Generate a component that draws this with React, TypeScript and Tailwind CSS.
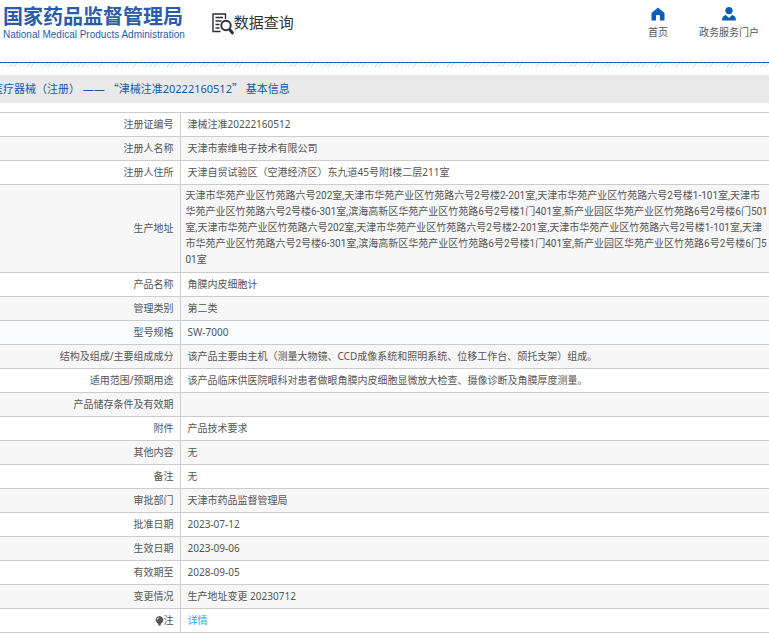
import React from 'react';

type Row = {
  label: string;
  value: string;
  highlight?: boolean;
  dense?: boolean;
  marked?: boolean;
  link?: boolean;
};

const ADDRESS =
  '天津市华苑产业区竹苑路六号202室,天津市华苑产业区竹苑路六号2号楼2-201室,天津市华苑产业区竹苑路六号2号楼1-101室,天津市华苑产业区竹苑路六号2号楼6-301室,滨海高新区华苑产业区竹苑路6号2号楼1门401室,新产业园区华苑产业区竹苑路6号2号楼6门501室';

const rows: Row[] = [
  { label: '注册证编号', value: '津械注准20222160512' },
  { label: '注册人名称', value: '天津市索维电子技术有限公司' },
  { label: '注册人住所', value: '天津自贸试验区（空港经济区）东九道45号附I楼二层211室' },
  { label: '生产地址', value: `${ADDRESS},${ADDRESS}`, dense: true },
  { label: '产品名称', value: '角膜内皮细胞计' },
  { label: '管理类别', value: '第二类' },
  { label: '型号规格', value: 'SW-7000', highlight: true },
  { label: '结构及组成/主要组成成分', value: '该产品主要由主机（测量大物镜、CCD成像系统和照明系统、位移工作台、颌托支架）组成。' },
  { label: '适用范围/预期用途', value: '该产品临床供医院眼科对患者做眼角膜内皮细胞显微放大检查、摄像诊断及角膜厚度测量。' },
  { label: '产品储存条件及有效期', value: '' },
  { label: '附件', value: '产品技术要求' },
  { label: '其他内容', value: '无' },
  { label: '备注', value: '无' },
  { label: '审批部门', value: '天津市药品监督管理局' },
  { label: '批准日期', value: '2023-07-12' },
  { label: '生效日期', value: '2023-09-06' },
  { label: '有效期至', value: '2028-09-05' },
  { label: '变更情况', value: '生产地址变更 20230712' },
  { label: '注', value: '详情', marked: true, link: true },
];

const SearchDocIcon = () => (
  <svg width="22" height="22" viewBox="0 0 22 22" fill="none" stroke="#2f2c38" aria-hidden="true">
    <path d="M13.500 6V1H1V18.500H8.500" strokeWidth="1.4" />
    <path d="M3.500 4.500h7.500M3.500 8h6M3.500 11.500h4M3.500 15h4" strokeWidth="1.3" />
    <circle cx="14" cy="12.500" r="4.700" strokeWidth="1.9" />
    <path d="M17.500 16.500l3.800 4.300" strokeWidth="3" />
  </svg>
);

const HomeIcon = () => (
  <svg width="14" height="14" viewBox="0 0 14 14" fill="#0d5cb8" aria-hidden="true">
    <path d="M7 0.500L13.500 6v7.500H9V9a1 1 0 0 0-1-1H6a1 1 0 0 0-1 1v4.500H0.500V6z" />
  </svg>
);

const UserIcon = () => (
  <svg width="14" height="14" viewBox="0 0 14 14" fill="#0d5cb8" aria-hidden="true">
    <circle cx="7" cy="3.600" r="3.600" />
    <path d="M4 8L7 11 10 8C12.800 8.600 14 10.500 14 13.500H0C0 10.500 1.200 8.600 4 8z" />
  </svg>
);

const BulbIcon = () => (
  <svg className="inline-block" width="9" height="10" viewBox="0 0 9 10" aria-hidden="true">
    <path d="M4.500 0a3.900 3.900 0 0 1 2.300 7L5.700 8v1.600H3.300V8L2.200 7A3.900 3.900 0 0 1 4.500 0z" fill="#555" />
    <path d="M2.200 3.800A2.300 2.300 0 0 1 4.200 1.700" stroke="#eee" strokeWidth="1" fill="none" />
  </svg>
);

const App: React.FC = () => {
  return (
    <div className="overflow-x-hidden bg-white pb-1 text-[10px] leading-4 text-[#555] font-['Noto_Sans','Noto_Sans_CJK_SC',sans-serif]">
      {/* Header */}
      <header className="flex h-[63px] items-start justify-between border-b border-[#1a5ca5] pr-[10px] pl-[3px]">
        <div className="flex items-start gap-[27px]">
          <div className="pt-[5px] text-[#2a5caa]">
            <h1 className="text-[20px] leading-6 font-bold">国家药品监督管理局</h1>
            <p className="font-['Liberation_Sans',sans-serif] text-[10px] leading-3">National Medical Products Administration</p>
          </div>
          <div className="flex items-center pt-3 text-[15px] leading-5 text-[#333]">
            <SearchDocIcon />
            <span className="pb-1">数据查询</span>
          </div>
        </div>
        <nav className="flex gap-[31px] pt-[7px]">
          <a href="#" className="flex flex-col items-center gap-[3px]">
            <HomeIcon />
            <span>首页</span>
          </a>
          <a href="#" className="flex flex-col items-center gap-[3px]">
            <UserIcon />
            <span>政务服务门户</span>
          </a>
        </nav>
      </header>
      <div className="h-1 bg-[repeating-linear-gradient(135deg,#dfe9ec_0px,#dfe9ec_1px,#fff_1px,#fff_3px)]" />

      {/* Title bar */}
      <div className="mt-2 bg-[#e9e9e9] py-1">
        <h2 className="-ml-2 text-[11px] leading-5 whitespace-nowrap text-[#1458a8]">
          医疗器械（注册） ——{' '}
          <span lang="zh-CN" className="font-['Noto_Sans_CJK_SC',sans-serif] leading-none">“</span>
          津械注准20222160512
          <span lang="zh-CN" className="font-['Noto_Sans_CJK_SC',sans-serif] leading-none">”</span>
          {' '}基本信息
        </h2>
      </div>

      {/* Details */}
      <table className="mt-[9px] w-full border-collapse">
        <tbody>
          {rows.map((row) => (
            <tr
              key={row.label}
              className={row.highlight ? 'bg-[#f9fbff]' : 'odd:bg-white even:bg-[#f7f7f7]'}
            >
              <th
                scope="row"
                className="w-[180px] border-y border-r border-[#ccc] pt-[3px] pr-[6px] pb-1 text-right font-normal whitespace-nowrap"
              >
                {row.marked && <BulbIcon />}
                {row.label}
              </th>
              <td
                className={`border-y border-[#ccc] pt-[3px] pb-1 break-all ${
                  row.dense ? "pl-[5px] font-['Roboto','Noto_Sans_CJK_SC',sans-serif]" : 'pl-[7px]'
                }`}
              >
                {row.link ? (
                  <a href="#" className="text-[#409eff]">{row.value}</a>
                ) : (
                  row.value
                )}
              </td>
            </tr>
          ))}
        </tbody>
      </table>
    </div>
  );
};

export default App;
